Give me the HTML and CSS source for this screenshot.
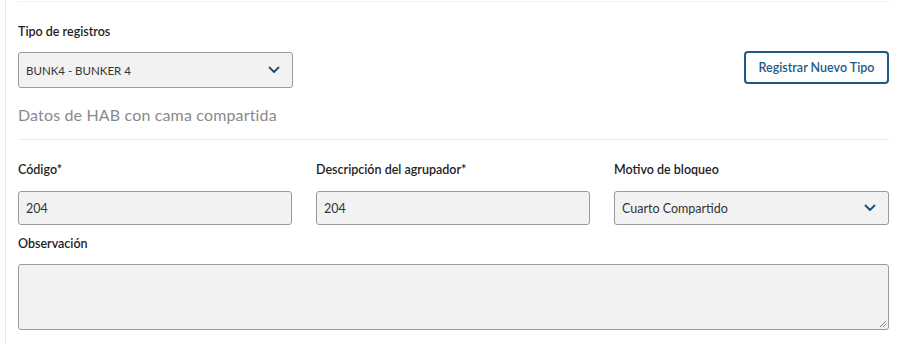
FILE: index.html
```html
<!DOCTYPE html>
<html lang="es">
<head>
<meta charset="utf-8">
<link rel="stylesheet" href="styles.css">
</head>
<body>
<div class="frame">
  <div class="content">
    <div class="top-row">
      <div class="field narrow">
        <label class="label">Tipo de registros</label>
        <div class="select tall">
          <span class="value small">BUNK4 - BUNKER 4</span>
          <svg class="chev" width="12" height="8" viewBox="0 0 12 8"><path d="M1.5 1.5 L6 6 L10.5 1.5" fill="none" stroke="#1f4b73" stroke-width="1.8" stroke-linecap="round" stroke-linejoin="round"/></svg>
        </div>
      </div>
      <button class="btn">Registrar Nuevo Tipo</button>
    </div>
    <h2 class="section">Datos de HAB con cama compartida</h2>
    <div class="grid">
      <div class="field">
        <label class="label">Código*</label>
        <div class="input"><span class="value">204</span></div>
      </div>
      <div class="field">
        <label class="label">Descripción del agrupador*</label>
        <div class="input"><span class="value">204</span></div>
      </div>
      <div class="field">
        <label class="label">Motivo de bloqueo</label>
        <div class="select"><span class="value">Cuarto Compartido</span>
          <svg class="chev" width="12" height="8" viewBox="0 0 12 8"><path d="M1.5 1.5 L6 6 L10.5 1.5" fill="none" stroke="#1f4b73" stroke-width="1.8" stroke-linecap="round" stroke-linejoin="round"/></svg>
        </div>
      </div>
    </div>
    <div class="field obs">
      <label class="label">Observación</label>
      <div class="textarea">
        <svg class="grip" width="8" height="8" viewBox="0 0 8 8"><path d="M7 1 L1 7 M7 4 L4 7" stroke="#888" stroke-width="1"/></svg>
      </div>
    </div>
  </div>
</div>
</body>
</html>
```

FILE: styles.css
```css
* { box-sizing: border-box; }
html, body { margin: 0; padding: 0; background: #fff; }
body {
  font-family: Lato, "Open Sans", "Liberation Sans", sans-serif;
  color: #222;
  width: 900px;
  height: 344px;
  overflow: hidden;
}
.frame {
  margin-left: 5px;
  border-left: 1px solid #e6e6e6;
  height: 344px;
  padding: 1px 11px 0 12px;
}
.content {
  border-top: 1px solid #f0f0f0;
  padding-top: 21px;
}
.top-row {
  display: flex;
  justify-content: space-between;
  align-items: flex-start;
}
.field { display: flex; flex-direction: column; }
.narrow { width: 275px; }
.label {
  font-size: 12.5px;
  font-weight: 600;
  color: #1e1e1e;
  line-height: 18px;
  height: 18px;
  margin-bottom: 12px;
}
.top-row .label { margin-bottom: 11px; }
.select, .input {
  height: 34px;
  background: #f2f2f2;
  border: 1px solid #9a9a9a;
  border-radius: 3px;
  display: flex;
  align-items: center;
  justify-content: space-between;
  padding: 0 12px 0 7px;
}
.tall { height: 36px; }
.value { font-size: 12.5px; color: #333; }
.value.small { font-size: 11.5px; }
.chev { display: block; }
.btn {
  margin-top: 28px;
  height: 33px;
  width: 145px;
  padding: 0;
  border: 2px solid #1f5a86;
  border-radius: 4px;
  background: #fff;
  color: #1f5a86;
  font-family: inherit;
  font-size: 12.5px;
  font-weight: 600;
}
.section {
  margin: 0;
  padding: 17px 0 14px;
  font-size: 16px;
  font-weight: 400;
  letter-spacing: 0.15px;
  color: #8a8a8a;
  border-bottom: 1px solid #eeeeee;
  line-height: 20px;
}
.grid {
  display: grid;
  grid-template-columns: 274px 274px 275px;
  column-gap: 24px;
  padding-top: 21px;
}
.obs { margin-top: 10px; }
.obs .label { margin-bottom: 11px; }
.textarea {
  height: 66px;
  background: #f2f2f2;
  border: 1px solid #9a9a9a;
  border-radius: 3px;
  display: flex;
  align-items: flex-end;
  justify-content: flex-end;
  padding: 0 1px 1px 0;
}
.grip { display: block; }
```
